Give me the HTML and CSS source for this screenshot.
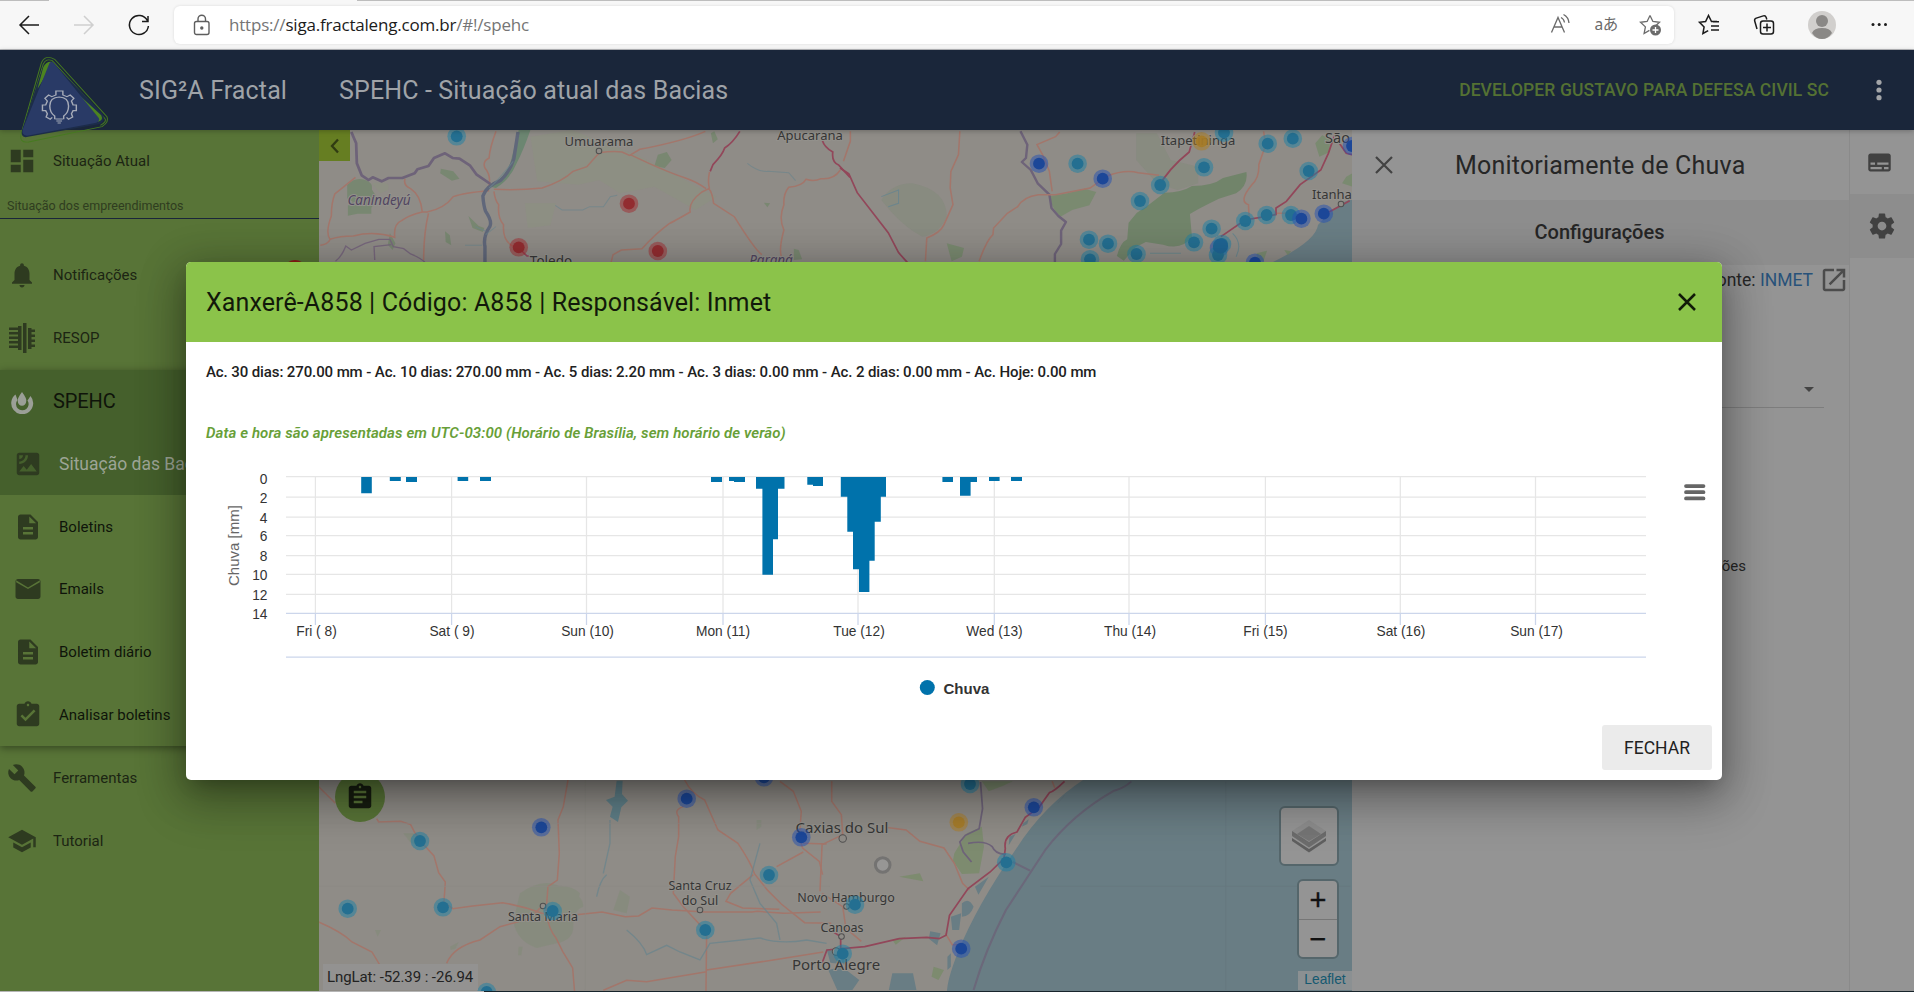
FILE: index.html
```html
<!DOCTYPE html>
<html lang="pt-BR">
<head>
<meta charset="utf-8">
<title>SIG²A Fractal</title>
<link rel="stylesheet" href="styles.css">
</head>
<body>
<div class="browser">
  <div class="tab-gap"></div>
  <svg class="nav" width="160" height="48" viewBox="0 0 160 48" fill="none" stroke="#1b1b1b" stroke-width="1.5">
    <path d="M39 24H20M29 15l-9 9 9 9"/>
    <path stroke="#cfcfcf" d="M74 24h19M84 15l9 9-9 9"/>
    <path d="M147.300 19.500A9.500 9.500 0 1 0 148.400 25M148 15v5.500h-6"/>
  </svg>
  <div class="address">
    <svg width="18" height="22" viewBox="0 0 18 22" fill="none" stroke="#5e5e5e" stroke-width="1.400"><rect x="1.500" y="7.500" width="14.500" height="13" rx="2"/><path d="M5 7.500V5a3.700 3.700 0 0 1 7.500 0v2.500"/><circle cx="8.800" cy="14" r="1" fill="#5e5e5e"/></svg>
    <div class="url">https://<b>siga.fractaleng.com.br</b>/#!/spehc</div>
    <svg class="addr-icons" width="120" height="30" viewBox="1544 10 120 30" fill="none" stroke="#6b6b6b" stroke-width="1.300">
      <path d="M1550.500 32.500l6.500-15 6.500 15M1553 27h8M1560 17.500q3 1.500 3.500 5M1562.500 14.500q5 2.500 5.500 8.500"/>
      <path d="M1649 15.500l2.900 6 6.600.8-4.800 4.500M1649 15.500l-2.900 6-6.600.8 4.900 4.600-1.300 6.600 5.300-3.100"/>
      <circle cx="1654.500" cy="30" r="5.500" fill="#6b6b6b" stroke="none"/><path stroke="#fff" d="M1651.500 30h6M1654.500 27v6"/>
      <text class="translate" x="1593.500" y="30">aあ</text>
    </svg>
  </div>
  <svg class="tools" width="210" height="40" viewBox="1690 5 210 40" fill="none" stroke="#1b1b1b" stroke-width="1.500">
    <path d="M1717 21.500h-5.500l-3-6-2.900 6-6.100.8 4.600 4.600-1.200 6.600 5.300-2.900M1711 26h8M1711 30h8M1713 21.700h6"/>
    <path d="M1757 29l-2.300-8q-.6-2.200 1.600-2.900l7-2.200q2.200-.6 2.900 1.500l.6 2.100"/><rect x="1760.500" y="21" width="13" height="13" rx="2.500"/><path d="M1767 23.500v8M1763 27.500h8"/>
    <circle cx="1822" cy="25" r="14" fill="#d1cfcd" stroke="none"/><circle cx="1822" cy="21" r="6" fill="#8a8886" stroke="none"/><path d="M1812 33q2-5 10-5t10 5q-4 6-10 6t-10-6z" fill="#8a8886" stroke="none"/>
    <g fill="#1b1b1b" stroke="none"><circle cx="1873" cy="24.500" r="1.500"/><circle cx="1879.200" cy="24.500" r="1.500"/><circle cx="1885.500" cy="24.500" r="1.500"/></g>
  </svg>
</div>

<header class="topbar">
  <span class="brand">SIG²A Fractal</span>
  <span class="page-title">SPEHC - Situação atual das Bacias</span>
  <span class="user">DEVELOPER GUSTAVO PARA DEFESA CIVIL SC</span>
  <svg class="kebab" width="6" height="24" fill="#a3a5a8"><circle cx="3" cy="4.300" r="2.600"/><circle cx="3" cy="12" r="2.600"/><circle cx="3" cy="19.700" r="2.600"/></svg>
  <svg class="logo" width="120" height="100" viewBox="0 0 294 300" preserveAspectRatio="none">
    <g fill="none" stroke="#467a20" stroke-width="2.500"><path d="M52 250L101 40Q110 12 134 28L262 200Q268 216 250 230L70 276Q46 280 52 250z"/><path d="M60 232L106 42Q113 24 128 32L256 204Q264 214 246 226"/></g>
    <path d="M54 240L106 48Q116 32 130 38L250 190Q262 210 244 222L62 262Q50 260 54 240z" fill="#1c2c4a"/>
    <path d="M92 116L106 52q6-18 20-17l2 10zM186 126l62 70q6 16-8 19l-6-10z" fill="#4c8420"/>
    <path d="M121 40Q126 30 134 42L242 204Q246 212 236 218L66 257Q52 256 56 238z" fill="#293a66"/>
    <g fill="none" stroke="#a6abb8" stroke-width="3.500"><path d="M128 202l-5 6-10-7 3-10-4-9h-8v-17h8l4-12-6-8 9-10 8 5 10-5v-12h17v12l10 5 8-5 9 10-6 8 4 12h8v17h-8l-4 9 3 10-10 7-5-6"/><path d="M134 208v-10q-12-10-12-30 0-26 23-27 23 1 23 27 0 20-12 30v10M136 207h18M138 213h14M141 219h8"/></g>
  </svg>
</header>

<div class="workspace">
  <nav class="sidebar">
    <a class="item first"><svg viewBox="0 0 24 24"><path d="M3 13h8V3H3v10zm0 8h8v-6H3v6zm10 0h8V11h-8v10zm0-18v6h8V3h-8z"/></svg>Situação Atual</a>
    <div class="caption">Situação dos empreendimentos</div>
    <a class="item gap"><svg viewBox="0 0 24 24"><path d="M12 22c1.100 0 2-.9 2-2h-4c0 1.100.89 2 2 2zm6-6v-5c0-3.070-1.640-5.640-4.500-6.320V4c0-.83-.67-1.500-1.500-1.500s-1.500.67-1.500 1.500v.68C7.630 5.360 6 7.920 6 11v5l-2 2v1h16v-1l-2-2z"/></svg>Notificações<i class="badge"></i></a>
    <a class="item"><svg viewBox="0 0 28 30" class="resop"><path d="M14 0h3.500v30H14zM9 3h3.500v24H9zM0 4.500h10v2.500H0zM0 9h10v2.500H0zM0 13.500h10V16H0zM0 18h10v2.500H0zM0 22.500h10V25H0zM19 5h3.500v21H19zM21 6.500h5V9h-5zM21 11.500h5V14h-5zM21 16.500h5V19h-5zM21 21.500h5V24h-5z"/></svg>RESOP</a>
    <div class="group">
      <a class="item parent"><svg viewBox="0 0 24 22"><path d="M5.500 2.500A11 11 0 1 0 20.500 4l-3 4.500a6.300 6.300 0 1 1-10-.5z"/><path d="M12 0q5 6.500 4.200 9.500a4.200 4.200 0 0 1-8.400 0Q7 6.500 12 0z"/></svg>SPEHC</a>
      <a class="item sub current"><svg viewBox="0 0 24 24"><path d="M19 3H5c-1.100 0-2 .9-2 2v14c0 1.100.9 2 2 2h14c1.100 0 2-.9 2-2V5c0-1.100-.9-2-2-2zM5 4.990h3C8 6.650 6.660 8 5 8V4.990zM5 12v-2c2.760 0 5-2.250 5-5.010h2C12 8.860 8.870 12 5 12zm0 6l3.500-4.500 2.500 3.010L14.500 12l4.500 6H5z"/></svg>Situação das Bacias</a>
      <a class="item sub"><svg viewBox="0 0 24 24"><path d="M14 2H6c-1.100 0-1.990.9-1.990 2L4 20c0 1.100.89 2 1.990 2H18c1.100 0 2-.9 2-2V8l-6-6zm2 16H8v-2h8v2zm0-4H8v-2h8v2zm-3-5V3.500L18.500 9H13z"/></svg>Boletins</a>
      <a class="item sub"><svg viewBox="0 0 24 24"><path d="M20 4H4c-1.100 0-1.990.9-1.990 2L2 18c0 1.100.9 2 2 2h16c1.100 0 2-.9 2-2V6c0-1.100-.9-2-2-2zm1.500 2.500L12 12 2.500 6.500V5L12 10.800 21.500 5z"/></svg>Emails</a>
      <a class="item sub"><svg viewBox="0 0 24 24"><path d="M14 2H6c-1.100 0-1.990.9-1.990 2L4 20c0 1.100.89 2 1.990 2H18c1.100 0 2-.9 2-2V8l-6-6zm2 16H8v-2h8v2zm0-4H8v-2h8v2zm-3-5V3.500L18.500 9H13z"/></svg>Boletim diário</a>
      <a class="item sub"><svg viewBox="0 0 24 24"><path d="M19 3h-4.180C14.400 1.840 13.300 1 12 1c-1.300 0-2.400.84-2.820 2H5c-1.100 0-2 .9-2 2v14c0 1.100.9 2 2 2h14c1.100 0 2-.9 2-2V5c0-1.100-.9-2-2-2zm-7 0c.55 0 1 .45 1 1s-.45 1-1 1-1-.45-1-1 .45-1 1-1zm-2 14l-4-4 1.410-1.410L10 14.170l6.590-6.590L18 9l-8 8z"/></svg>Analisar boletins</a>
    </div>
    <a class="item"><svg viewBox="0 0 24 24" class="wide"><path d="M22.700 19l-9.100-9.100c.9-2.300.4-5-1.500-6.900-2-2-5-2.400-7.400-1.300L9 6 6 9 1.600 4.700C.4 7.100.9 10.100 2.900 12.100c1.900 1.900 4.600 2.400 6.900 1.500l9.100 9.100c.4.4 1 .4 1.400 0l2.300-2.300c.5-.4.5-1.100.1-1.400z"/></svg>Ferramentas</a>
    <a class="item"><svg viewBox="0 0 24 24" class="wide"><path d="M5 13.180v4L12 21l7-3.820v-4L12 17l-7-3.820zM12 3L1 9l11 6 9-4.910V17h2V9L12 3z"/></svg>Tutorial</a>
  </nav>

  <div class="map">
    <svg class="tiles" viewBox="319 130 1033 862" width="1033" height="862">
      <defs>
        <g id="c"><circle r="9.300" fill="#1b80a5" opacity=".5"/><circle r="5.900" fill="#246f91"/></g>
        <g id="b"><circle r="9.300" fill="#2450b4" opacity=".5"/><circle r="5.900" fill="#1c4798"/></g>
        <g id="r"><circle r="9.300" fill="#a12a30" opacity=".5"/><circle r="5.900" fill="#922c30"/></g>
        <g id="o"><circle r="9.300" fill="#b07d20" opacity=".5"/><circle r="5.900" fill="#a67a25" opacity=".85"/></g>
        <g id="town"><circle r="2.300" fill="#8f8c87" stroke="#4f4f4f"/></g>
      </defs>
      <!-- sea -->
      <g fill="#697d84">
        <path d="M1353 199q-14 2-35 26-2 16-45 37l-80 60h160z"/>
        <path d="M1086 778q-42 27-70 71-39 56-58 103-11 28-11 40h406V778z"/>
      </g>
      <!-- north west -->
      <g transform="translate(310 120) scale(.3444 .3333)" fill="none">
        <g fill="#71866a" stroke="none" opacity=".75"><path d="M108 195q20-24 50-16 26 8 22 30l18 28-20 26v18h-40l-28 6v-30l14-12-16-10z"/><path d="M380 146l36 8 18 22-22 6-34-22zM1010 104l26-8 14 24-20 24-30-6zM392 334l14 12 4 30-16-10zM460 288l30 30 16 6-4 12-30-12zM1405 386l14 4 10 28-24 2zM1318 248l18 2-8 12zM232 340l16 30-8 20-14-16zM1164 40l10-6 10 24-14 12z"/></g>
        <path fill="#8a9a78" opacity=".22" stroke="none" d="M624 250h90l-16 66-66 8zM180 190q60-10 46 20l-22 10zM640 50l120-20 200 80 220 120-60 40-120-70-100 20-60-40-60 14-120-10z"/>
        <path d="M640 30q-20 60-40 100-20 50-60 74l-16-4q50-36 60-80l22-90z" fill="#6c8671"/>
        <path stroke="#a3766b" stroke-width="4.500" d="M540 34q-18 50-20 80-20 10-12 30 20 24 10 60M534 208q70 4 140-4 60-20 90-50l40-14 36-42q40-6 66-2l22 10 30-18q130-26 190-54M930 104q100 50 160 70 30 10 60 32M1158 206l-20 10q-40 30-34 60-50 30-60 34-40 30-80 76l-60 4-24 14-6 24M1158 206q10 10 14 44l60 40q60 100 80 114M1540 150q-20 30-56 26-20 10-44 2-10 20-50 24-16 20-14 52-16 40 0 76-16 60-6 84M534 214q4 30 14 40-4 40 14 60-4 50 30 66M276 176q-6 20 16 30 30 20 34 70h14q50-10 76-46 30-12 104-18M326 276q-40 10-60 26-24 10-20 50-60-20-120-4-40 0-68 10-14-20 4-70 0-40 10-66l60-50M30 376q20-2 28-16M344 280q-14 60-14 140M1160 206q-6-20 0-50"/>
        <path stroke="#92475a" stroke-width="5" d="M1248 34q-20 34-44 50-6 20-34 50l-8 20M1488 62q6 20 30 34-4 30 18 40l32 36M606 384l24 24h12"/>
        <path stroke="#6e6379" stroke-width="8" stroke-linejoin="round" d="M120 36l14 34 2 60 14 36 20 14 12-8 26 12 20-10h40l36-14 8-12 32-10 16-24 32-14 22 14 20 2 30 20 20 28 40 28"/>
        <path stroke="#60677a" stroke-width="10" d="M604 36l-12 80q-12 40-40 66-40 16-50 46 2 30 8 46 20 30 12 46-20 30-14 60v50"/>
        <path stroke="#78687d" stroke-width="4" d="M74 424q18-14 30-46l16 12 40-20 40-12h32l10 22 30 6 20 16q34 14 44 28M188 420l-2-40 50-6"/>
        <path stroke="#6c858c" stroke-width="3" opacity=".7" d="M712 256l20 14h60l20-10h40l20-30 20-4M450 376h50M480 320l30 14M540 320l-30 24M1270 130q30 26 60 24l60 4 20 24M520 204q24-20 70-80"/>
      </g>
      <!-- north east -->
      <g transform="translate(840 120) scale(.3444 .3333)" fill="none">
        <path fill="#71846a" d="M1180 156q6 40-30 64l-50 16q-60 30-84 46l6 70q-30 40-84 22l-50-8-30 16-34 40-20-14q10-40 30-50l4-50 24-30 30-20 50-40q50 0 80-20 60 0 90-24z"/>
        <path fill="#74896a" opacity=".8" d="M610 228l50-8 50-14 34 10-20 40-50 14-34 20q-30-30-30-62zM1380 70l20-24 22 10v40l-30 14zM310 370l50 14-6 26-30 14zM1290 390l20 4-10 12zM1210 400l30-8-10 30h-20zM1470 170l18-10v40l-30-10z"/>
        <path fill="#74896a" opacity=".25" d="M120 240q30-50 90-50 100 20 100 100-20 50-70 60-60-30-120-110zM150 260q40-50 80-40 60 40 50 90-40 30-60 20-50-30-70-70zM860 40h60l40 80 80 20 0 50-60 20-60-20-60-70z"/>
        <path stroke="#6e6379" stroke-width="7" stroke-linejoin="round" d="M524 34l20 40-4 40-12 12 26 24 20 40 34 34 6 40 20 24 22 18-14 26v40l-18 30v24"/>
        <path stroke="#a3766b" stroke-width="4.500" d="M348 34l-4 70-22 50-2 50 8 50-26 60q-10 24-50 40l-4 70M404 424q20-60 40-80l2-20 40-44 30-20q16-30 60-36h50l100-20 50-36q50-20 90-10l60 8M638 36l-12 14-54 24 16 30 20 50 8 60M30 34v30l-20 60M1230 34l6 40-20 60q2 40-20 60-40 50-10 60l2 40M1260 280h50"/>
        <path stroke="#92475a" stroke-width="5" d="M0 144q20 14 26 18l24 56 90 120 30 60 26 30M1030 36l-16 60q-60 50-90 106M1438 40l-20 60-22 50-60 44-40 50-30 20v20l-90 16-70 50M1450 70l20 30 24 6M1480 242l-60 34"/>
        <path stroke="#6c858c" stroke-width="3" d="M120 230l50-20v40l-30 10M900 400h90M1140 340q30 30 10 70"/>
      </g>
      <!-- south west -->
      <g transform="translate(310 770) scale(.3333)" fill="none">
        <path fill="#788b69" opacity=".3" d="M630 370q70-50 120-20 70 20 70 60-30 10-30 60 0 40-50 50l-60 14q-60-20-70-80zM720 350q60-10 90 20l-10 40-70 0zM930 360l30 20-10 50-40-10zM280 190h30l20 40-30-14zM420 530l26-14-10 20-14 4zM195 480h18l-10 20zM626 530h12l-4 26h-10zM1340 150h14v20l-14 10z"/>
        <path fill="#5f7f88" d="M920 32h18l-2 40 18 20-20 20-10 44-24-16 8-30-20-20 26-10z"/>
        <path stroke="#a3766b" stroke-width="4.500" d="M26 50l50 50M200 146l6 10 66-2 30 10q10 24 30 50l40 44 14 50 20 28-4 60 26 20 60-8 90-10q60 10 118 32 50 2 90 6l90-10 70 14 40-2 40-24 60 6 100 6h140l16-2 80 6 110-4M774 30l-14 80-16 40 4 100-6 80-28 20-6 80q10 50 30 74l20 40 30 50 6 74M26 456q70 30 100 60l60 30 30 50M410 580q20-50 100-70l60-40 90-24 30-32M1124 30q20 40 60 60l40 90 60 40q40 60 50 92l40 50 40 40 70 56 80 2M1120 110q-30 10-14 30v60l-10 60-6 110 30 40 50 54 20 30-2 170M1190 600l200-30 150-24M1190 605l-180 30-60-4-70 30M1330 314l-68 56-14 24 50 20 110 4M1410 34l40 30 24 60-6 80 10 30 50 40 10 40M1480 220l70 2M1400 290l80-44"/>
        <path stroke="#6c858c" stroke-width="4" opacity=".8" d="M900 150v70l-20 90M860 380q10-50 30-66M950 480q50 40 60 74l60-28 40 20 60 24 30-50 150-16q60 20 140 6l60 10M1350 220l-30 110 30 70 50 60 10 50"/>
        <path stroke="#8b8883" stroke-width="2" d="M826 30v630M0 349h1560M0 160h1560"/>
      </g>
      <!-- south east -->
      <g transform="translate(820 770) scale(.3444 .3333)" fill="none">
        <path fill="#697d84" d="M412 400q20-20 34 10-10 30-34 30zM450 350l40-30-30 54zM320 484l30 6-10 36-24-20zM550 200l18-8-20 34zM590 160l16-12-4 14-16 8zM380 440l30-10-6 50-20 0zM24 600l40-10 50 40-20 30H50zM210 610h60l10 50h-80zM20 540h50l10 44-50-6zM370 560l10-10v40l-10 10z"/>
        <path fill="#788b69" opacity=".8" d="M390 250l36-60 44-20 6 60-14 80-50 2-26-40zM470 34h90l-30 14-40 16zM230 320l60-10 10 24zM330 590l30 10-16 30-20-10zM210 510l40-10-30 24z"/>
        <path stroke="#a3766b" stroke-width="4.500" d="M34 34v60l28 40 4 60-60 30-6 140M190 172l60 8 40 34 70 20 30 46 24 60 20 20M674 34l8 20M6 370l60 40 10 70M364 490l20 34h20M70 470l50 44"/>
        <path stroke="#92475a" stroke-width="5" d="M710 34q-30 30-44 34l-30 44-40 30-24 44q-40 10-34 50l-4 30-40 40-64 50-54 80-10 60-20 10-36-4-80 4-100 24-110 10-14 40M30 480l30 20v60"/>
        <path stroke="#6e6379" stroke-width="5" d="M466 36l6 80-10 60-40 20-16 20 10 30 24 30M430 220q50-10 70 10 10 24 40 22"/>
        <path stroke="#6b687a" stroke-width="6" d="M904 34q-20 20-50 28-120 70-200 178l-114 180q-60 120-94 240M560 276l50 26"/>
        <path stroke="#66777e" stroke-width="2" d="M1178 34v626M640 349h900M690 100l20-24"/>
      </g>
      <g class="places">
        <use href="#town" x="599" y="151"/><use href="#town" x="1341" y="204"/><use href="#town" x="543" y="906"/><use href="#town" x="700" y="910"/><use href="#town" x="846.500" y="906.500"/><use href="#town" x="841.500" y="936.500"/>
        <circle cx="842.700" cy="838.500" r="3.200" fill="#8f8c87" stroke="#4f4f4f"/><circle cx="836" cy="951.500" r="3.200" fill="#8f8c87" stroke="#4f4f4f"/>
        <text x="599" y="146" font-size="13">Umuarama</text><text x="810" y="140" font-size="13">Apucarana</text>
        <text x="379" y="205" font-size="13.500" class="state">Canindeyú</text><text x="551" y="266" font-size="13.500">Toledo</text><text x="771" y="265" font-size="13.500" class="state">Paraná</text>
        <text x="1198" y="144.500" font-size="13">Itapetininga</text><text x="1337.500" y="142.500" font-size="14.500">São</text><text x="1332" y="199" font-size="13">Itanha</text>
        <text x="543" y="920.500" font-size="12.500">Santa Maria</text><text x="700" y="890" font-size="12.500">Santa Cruz</text><text x="700" y="905" font-size="12.500">do Sul</text>
        <text x="842" y="832.500" font-size="15">Caxias do Sul</text><text x="846" y="902" font-size="12.500">Novo Hamburgo</text><text x="842" y="932" font-size="12.500">Canoas</text><text x="836" y="969.500" font-size="15">Porto Alegre</text>
      </g>
      <use href="#c" x="456.700" y="136.300"/><use href="#r" x="629" y="203.700"/><use href="#r" x="518.700" y="247.300"/><use href="#r" x="657.800" y="251"/>
      <use href="#b" x="1039" y="163.700"/><use href="#c" x="1077.600" y="163.700"/><use href="#b" x="1102.700" y="178.700"/><use href="#c" x="1140" y="201"/><use href="#c" x="1160.200" y="185"/><use href="#c" x="1204" y="167.300"/><use href="#o" x="1201.600" y="141.300"/><use href="#c" x="1224" y="132.700"/><use href="#c" x="1267.700" y="143.700"/><use href="#c" x="1292.800" y="138.700"/><use href="#c" x="1308.700" y="171"/><use href="#b" x="1352" y="146"/><use href="#b" x="1323.800" y="213.700"/><use href="#c" x="1291" y="215"/><use href="#b" x="1301.400" y="218.700"/><use href="#c" x="1266.600" y="215"/><use href="#c" x="1245.300" y="221"/><use href="#c" x="1211.600" y="228.700"/><use href="#c" x="1194" y="242.300"/><use href="#b" x="1219" y="248"/><use href="#c" x="1222" y="244"/><use href="#c" x="1218" y="255"/><circle cx="1220.500" cy="246" r="7.500" fill="#1f6594"/><use href="#c" x="1089" y="239.700"/><use href="#c" x="1108" y="243.700"/><use href="#c" x="1090" y="259.300"/><use href="#c" x="1136.500" y="254"/><use href="#b" x="1255" y="262.700"/>
      <use href="#c" x="420" y="841"/><use href="#b" x="541.300" y="827.300"/><use href="#c" x="347.700" y="908.700"/><use href="#c" x="443" y="907.300"/><use href="#c" x="552.700" y="911"/><use href="#b" x="686.700" y="798.700"/><use href="#b" x="764" y="777.300"/><use href="#b" x="801.300" y="837.300"/><use href="#c" x="769" y="875"/><use href="#c" x="705.300" y="930"/><use href="#c" x="486.700" y="992"/>
      <use href="#c" x="970" y="784"/><use href="#b" x="1033.800" y="807.300"/><use href="#o" x="958.800" y="822.300"/><use href="#c" x="1006.300" y="862.300"/><circle cx="882.700" cy="865" r="7.300" fill="#979695" stroke="#747372" stroke-width="3"/><use href="#c" x="855" y="904.700"/><use href="#b" x="961.200" y="948.700"/><use href="#c" x="842.700" y="953.700"/>
    </svg>
    <div class="collapse"><svg width="10" height="16" fill="none" stroke="#303c12" stroke-width="2.300"><path d="M8 1.500L2 8l6 6.500"/></svg></div>
    <div class="fab"><svg width="30" height="30" viewBox="0 0 24 24" fill="#171d10"><path d="M19 3h-4.180C14.400 1.840 13.300 1 12 1c-1.300 0-2.400.84-2.820 2H5c-1.100 0-2 .9-2 2v14c0 1.100.9 2 2 2h14c1.100 0 2-.9 2-2V5c0-1.100-.9-2-2-2zm-7 0c.55 0 1 .45 1 1s-.45 1-1 1-1-.45-1-1 .45-1 1-1zm2 14H7v-2h7v2zm3-4H7v-2h10v2zm0-4H7V7h10v2z"/></svg></div>
    <div class="layers"><svg width="34" height="34" viewBox="0 0 34 34"><path fill="#5f5f5f" d="M0 22l17 11.500L34 22v-3L17 30 0 19z"/><path fill="#6c6c6c" d="M0 17l17 11.500L34 17v-3L17 25 0 14z"/><path fill="#8c8c8c" d="M17 1l17 11-17 11L0 12z"/><path fill="#757575" d="M17 7l12 8-12 7-12-7z"/><path fill="#6b6b6b" d="M0 12l17 11 17-11v2.500L17 25.500 0 14.500z"/></svg></div>
    <div class="zoom"><span>+</span><span>−</span></div>
    <div class="lnglat">LngLat: -52.39 : -26.94</div>
    <div class="credit">Leaflet</div>
  </div>

  <aside class="panel">
    <div class="panel-head"><svg width="18" height="18" fill="none" stroke="#424242" stroke-width="2.200"><path d="M1 1l16 16M17 1L1 17"/></svg><span>Monitoriamente de Chuva</span></div>
    <div class="panel-sub">Configurações</div>
    <div class="source">Fonte: <a>INMET</a><svg width="30" height="30" viewBox="0 0 24 24" fill="#4c4c4c"><path d="M19 19H5V5h7V3H5c-1.110 0-2 .9-2 2v14c0 1.100.89 2 2 2h14c1.100 0 2-.9 2-2v-7h-2v7zM14 3v2h3.590l-9.830 9.830 1.410 1.410L19 6.410V10h2V3h-7z"/></svg></div>
    <div class="select"><i></i></div>
    <div class="stations">Estações</div>
  </aside>
  <div class="rail">
    <div class="rail-btn"><svg width="27" height="27" viewBox="0 0 24 24" fill="#414141"><path d="M20 4H4c-1.100 0-2 .9-2 2v12c0 1.100.9 2 2 2h16c1.100 0 2-.9 2-2V6c0-1.100-.9-2-2-2zM4 12h4v2H4v-2zm10 6H4v-2h10v2zm6 0h-4v-2h4v2zm0-4H10v-2h10v2z"/></svg></div>
    <div class="rail-btn on"><svg width="30" height="30" viewBox="0 0 24 24" fill="#414141"><path d="M19.430 12.980c.04-.32.07-.64.07-.98s-.03-.66-.07-.98l2.110-1.650c.19-.15.24-.42.12-.64l-2-3.460c-.12-.22-.39-.3-.61-.22l-2.490 1c-.52-.4-1.080-.73-1.690-.98l-.38-2.650C14.460 2.180 14.250 2 14 2h-4c-.25 0-.46.18-.49.42l-.38 2.650c-.61.25-1.170.59-1.690.98l-2.490-1c-.23-.09-.49 0-.61.22l-2 3.460c-.13.22-.07.49.12.64l2.110 1.650c-.04.32-.07.65-.07.98s.03.66.07.98l-2.110 1.650c-.19.15-.24.42-.12.64l2 3.460c.12.22.39.3.61.22l2.490-1c.52.4 1.080.73 1.690.98l.38 2.650c.03.24.24.42.49.42h4c.25 0 .46-.18.49-.42l.38-2.650c.61-.25 1.170-.59 1.690-.98l2.490 1c.23.09.49 0 .61-.22l2-3.460c.12-.22.07-.49-.12-.64l-2.110-1.650zM12 15.500c-1.930 0-3.500-1.570-3.500-3.500s1.570-3.500 3.500-3.500 3.500 1.570 3.500 3.500-1.570 3.500-3.500 3.500z"/></svg></div>
  </div>
</div>
<div class="taskbar"></div>

<div class="dialog">
  <div class="dialog-head"><span>Xanxerê-A858 | Código: A858 | Responsável: Inmet</span><svg width="18" height="18" fill="none" stroke="#111a08" stroke-width="2.500"><path d="M1 1l16 16M17 1L1 17"/></svg></div>
  <div class="dialog-body">
    <p class="totals">Ac. 30 dias: 270.00 mm - Ac. 10 dias: 270.00 mm - Ac. 5 dias: 2.20 mm - Ac. 3 dias: 0.00 mm - Ac. 2 dias: 0.00 mm - Ac. Hoje: 0.00 mm</p>
    <p class="note">Data e hora são apresentadas em UTC-03:00 (Horário de Brasília, sem horário de verão)</p>
    <svg class="chart" width="1536" height="250" viewBox="186 460 1536 250">
      <path stroke="#e6e6e6" stroke-width="1.250" fill="none" d="M286 476.700H1646M286 497H1646M286 517H1646M286 535.700H1646M286 555.700H1646M286 574.300H1646M286 594.300H1646M315.400 477V613M451.600 477V613M586.500 477V613M723 477V613M858 477V613M994.300 477V613M1129 477V613M1265.400 477V613M1400.300 477V613M1535.500 477V613"/>
      <path stroke="#ccd6eb" stroke-width="1.250" fill="none" d="M286 613.300H1646M286 657H1646M315.400 613V625M451.600 613V625M586.500 613V625M723 613V625M858 613V625M994.300 613V625M1129 613V625M1265.400 613V625M1400.300 613V625M1535.500 613V625"/>
      <path fill="#0072ab" d="M361.200 477h10.600v16.300h-10.600zM389.800 477h11v4h-11zM406 477h11v5h-11zM457.600 477h10.600v4h-10.600zM480 477h11v4h-11zM711 477h11v5h-11zM729 477h16v5h-11v-1h-5zM756 477h28.500v11.700H778v50.600h-5v35.400h-10.600v-86H756zM807.300 477H823v9h-10v-1.300h-5.700zM840.800 477H886v19.700h-5.200v25h-6.100v39h-5.300V592H859v-22.700h-6v-37.600h-5.700v-35h-6.500zM942.400 477H953v5h-10.600zM960 477h17v5h-6.400v13.700H960zM989 477h10.600v4H989zM1011 477h11v4h-11z"/>
      <g class="xlab"><text x="316.500" y="636">Fri ( 8)</text><text x="452" y="636">Sat ( 9)</text><text x="587.500" y="636">Sun (10)</text><text x="723" y="636">Mon (11)</text><text x="859" y="636">Tue (12)</text><text x="994.500" y="636">Wed (13)</text><text x="1130" y="636">Thu (14)</text><text x="1265.500" y="636">Fri (15)</text><text x="1401" y="636">Sat (16)</text><text x="1536.500" y="636">Sun (17)</text></g>
      <g class="ylab"><text x="267.500" y="484">0</text><text x="267.500" y="503">2</text><text x="267.500" y="523">4</text><text x="267.500" y="541">6</text><text x="267.500" y="561">8</text><text x="267.500" y="580">10</text><text x="267.500" y="600">12</text><text x="267.500" y="619">14</text></g>
      <text class="axis" transform="translate(238.500 586) rotate(-90)">Chuva [mm]</text>
      <circle cx="927.300" cy="687.500" r="7.500" fill="#0072ab"/><text class="legend" x="943.500" y="694">Chuva</text>
      <path stroke="#666" stroke-width="3.750" stroke-linecap="round" d="M1686 486h17.500M1686 492.200h17.500M1686 498.400h17.500"/>
    </svg>
  </div>
  <div class="dialog-foot"><button>FECHAR</button></div>
</div>
</body>
</html>
```
FILE: styles.css
```css
* { box-sizing: border-box; }
body { margin: 0; width: 1914px; height: 992px; overflow: hidden; position: relative; display: flex; flex-direction: column; font-family: Roboto, sans-serif; background: #949494; }
svg { display: block; flex: none; }

.browser { height: 50px; flex: none; display: flex; align-items: center; background: #f7f7f7; border-top: 1px solid #bdbdbd; border-bottom: 1px solid #b9babd; position: relative; }
.tab-gap { position: absolute; left: 49px; top: -1px; width: 308px; height: 1px; background: #f7f7f7; }
.address { margin-left: 14px; width: 1500px; height: 38px; border-radius: 6px; background: #fff; box-shadow: 0 0 3px rgba(0,0,0,.12); display: flex; align-items: center; padding: 0 9px 0 19px; }
.url { margin-left: 18px; flex: 1; font: 17px/36px "Open Sans", sans-serif; letter-spacing: -.2px; color: #757575; }
.url b { font-weight: 400; color: #1b1b1b; }
.translate { font: 15.500px "Noto Sans", "Noto Sans CJK JP", sans-serif; fill: #6b6b6b; stroke: none; letter-spacing: -.5px; }
.tools { margin-left: 16px; }

.topbar { height: 80px; flex: none; background: #1a263a; position: relative; z-index: 2; display: flex; align-items: center; padding: 0 32px 0 139px; color: #9fa3a8; font-size: 25px; letter-spacing: .13px; box-shadow: 0 1px 5px rgba(0,0,0,.25); }
.page-title { margin-left: 52px; }
.user { margin-left: auto; font-size: 17.500px; font-weight: 500; letter-spacing: .09px; color: #547133; }
.kebab { margin-left: 47px; }
.logo { position: absolute; left: 0; top: 0; }

.workspace { flex: 1; display: flex; min-height: 0; }
.sidebar { width: 319px; flex: none; background: #587437; font-size: 15px; color: #1c2513; }
.item { height: 62.800px; display: flex; align-items: center; position: relative; padding-left: 7px; }
.item svg { width: 30px; height: 30px; margin-right: 16px; fill: #2e3b20; }
.item .resop { width: 28px; margin: 0 16px 0 2px; }
.item.first { height: 62px; }
.caption { height: 27px; border-bottom: 1px solid #1a263a; font-size: 12.500px; line-height: 27px; padding-left: 7px; color: #2f3d20; }
.item.gap { margin-top: 25px; }
.badge { position: absolute; right: 13px; top: 16px; width: 22px; height: 22px; border-radius: 50%; background: #8c1d18; }
.group { box-shadow: 0 2px 8px rgba(0,0,0,.4); position: relative; }
.item.parent { background: #45602c; font-size: 20px; color: #0f140a; letter-spacing: -.1px; }
.item.parent svg { width: 24px; height: 22px; margin: 4px 19px 0 3px; fill: #9b9f97; }
.item.sub { padding-left: 13px; color: #0f140a; }
.item.sub svg { margin-right: 16px; }
.item.current { background: #45602c; font-size: 17.500px; color: #9da596; }

.map { width: 1033px; flex: none; position: relative; background: #8f8c87; overflow: hidden; }
.places { font-family: "Noto Sans", sans-serif; fill: #363636; text-anchor: middle; paint-order: stroke; stroke: #93918c; stroke-width: 2px; }
.state { font-style: italic; fill: #514560; }
.collapse { position: absolute; left: 0; top: 0; width: 31px; height: 31px; background: #667e22; display: flex; align-items: center; justify-content: center; }
.fab { position: absolute; left: 16px; top: 642px; width: 50px; height: 50px; border-radius: 50%; background: #587437; display: flex; align-items: center; justify-content: center; }
.layers { position: absolute; left: 960px; top: 676px; width: 60px; height: 60px; border: 2px solid #55666b; border-radius: 6px; background: #949494; display: flex; align-items: center; justify-content: center; }
.zoom { position: absolute; left: 978px; top: 749px; width: 42px; height: 80px; border: 2px solid #55666b; border-radius: 6px; background: #949494; font: 29px/38px "Liberation Sans", sans-serif; -webkit-text-stroke: .4px #111; color: #111; text-align: center; }
.zoom span { display: block; height: 38px; }
.zoom span + span { border-top: 1px solid #767676; }
.lnglat { position: absolute; left: 4px; bottom: 2px; width: 155px; height: 26px; background: #939291; font-size: 15px; line-height: 26px; letter-spacing: -.08px; padding-left: 4px; color: #222; white-space: nowrap; }
.credit { position: absolute; right: 0; bottom: 2px; width: 54px; height: 19px; background: #8b9092; font: 13.750px/18px "Liberation Sans", sans-serif; color: #155970; text-align: center; }

.panel { width: 497px; flex: none; background: #949494; color: #262626; }
.panel-head { height: 70px; display: flex; align-items: center; padding-left: 23px; font-size: 25px; letter-spacing: .2px; }
.panel-head span { margin-left: 62px; }
.panel-sub { height: 65px; background: #8d8d8d; font-size: 20px; font-weight: 500; line-height: 65px; text-align: center; padding-right: 2px; }
.source { height: 30px; display: flex; align-items: center; justify-content: flex-end; font-size: 17.500px; white-space: pre; }
.source a { color: #28527a; }
.source svg { margin-left: 6px; }
.select { height: 113px; margin: 0 25px; border-bottom: 1px solid #7d7d7d; display: flex; justify-content: flex-end; align-items: flex-end; padding: 0 10px 15px; }
.select i { border: 5px solid transparent; border-top-color: #444; border-bottom: 0; }
.stations { margin: 148px 103px 0 0; font-size: 15px; line-height: 20px; text-align: right; }
.rail { flex: 1; border-left: 1px solid #8a8a8a; background: #949494; }
.rail-btn { height: 64px; display: flex; align-items: center; padding-left: 16px; }
.rail-btn.on { background: #8d8d8d; padding-left: 17px; }
.taskbar { position: absolute; left: 0; bottom: 0; width: 100%; height: 1px; background: #17242b; border-left: 484px solid #b5b5b5; }

.dialog { position: absolute; z-index: 5; left: 186px; top: 262px; width: 1536px; height: 518px; border-radius: 5px; background: #fff; display: flex; flex-direction: column; box-shadow: 0 9px 19px -9px rgba(0,0,0,.3), 0 19px 48px 4px rgba(0,0,0,.22), 0 8px 40px 8px rgba(0,0,0,.18); }
.dialog-head { height: 80px; flex: none; background: #8bc34a; border-radius: 5px 5px 0 0; display: flex; align-items: center; justify-content: space-between; padding: 0 26px 0 20px; font-size: 25px; letter-spacing: .12px; color: #12190a; }
.dialog-body { flex: 1; }
.totals, .note { margin: 0; padding-left: 20px; font-size: 15px; font-weight: 500; line-height: 20px; white-space: nowrap; }
.totals { padding-top: 20px; color: #212121; letter-spacing: -.105px; }
.note { padding-top: 41px; color: #689f38; font-style: italic; font-weight: 600; letter-spacing: .1px; }
.chart { margin-top: 17px; font-family: "Liberation Sans", sans-serif; }
.xlab { font-size: 13.750px; fill: #333; text-anchor: middle; }
.ylab { font-size: 13.750px; fill: #333; text-anchor: end; }
.axis { font-size: 15px; fill: #666; }
.legend { font-size: 15px; font-weight: 700; fill: #333; }
.dialog-foot { position: absolute; right: 10px; bottom: 10px; }
button { width: 110px; height: 45px; border: 0; border-radius: 3px; background: #ebebeb; font: 17.500px Roboto, sans-serif; color: #212121; }
```
